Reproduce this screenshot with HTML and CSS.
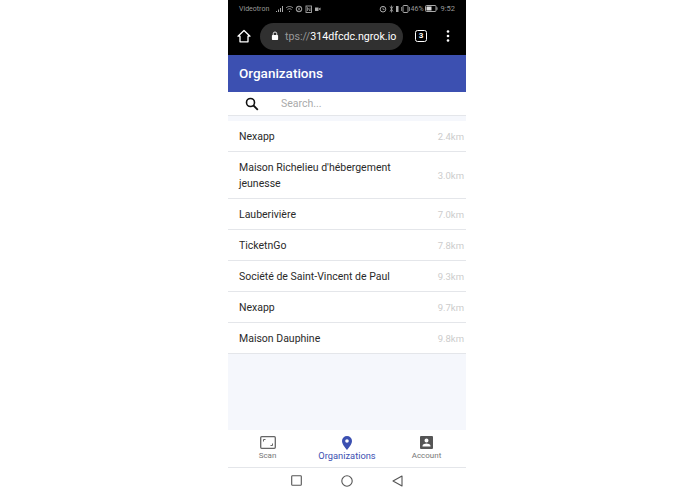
FILE: index.html
```html
<!DOCTYPE html>
<html lang="en">
<head>
<meta charset="utf-8">
<title>Organizations</title>
<link rel="stylesheet" href="styles.css">
</head>
<body>
<div class="phone">
  <div class="chrome">
    <div class="status">
      <div class="status-group">
        <span>Videotron</span>
        <svg class="st-left" viewBox="0 0 46 8" width="46" height="8">
          <path d="M1 7h1V6H1zM3 7h1V4.500H3zM5 7h1V3H5zM7 7h1V1H7z" fill="#aaa"/>
          <path d="M11 3c2-2 5-2 7 0M12.500 4.500c1-1 3-1 4 0M14 6.500h1" stroke="#aaa" stroke-width=".9" fill="none"/>
          <circle cx="24" cy="4" r="2.800" stroke="#aaa" fill="none"/>
          <path d="M22 1.500l4 5M26 1.500l-4 5" stroke="#aaa" stroke-width=".6"/>
          <rect x="31" y="1" width="5.500" height="6.500" stroke="#aaa" stroke-width=".9" fill="none"/>
          <path d="M32.500 6V2.500L35 6V2.500" stroke="#aaa" stroke-width=".7" fill="none"/>
          <rect x="40" y="2.500" width="3.500" height="3.500" fill="#aaa"/><path d="M43.500 4l2-1.500v3z" fill="#aaa"/>
        </svg>
      </div>
      <div class="status-group">
        <svg viewBox="0 0 21 8" width="21" height="8">
          <circle cx="4" cy="4.200" r="2.800" stroke="#aaa" fill="none"/>
          <path d="M4 2.500V4.500H5.500" stroke="#aaa" stroke-width=".7" fill="none"/>
          <path d="M11 1.500l3 5M14 1.500l-3 5M12.500 .5v7" stroke="#aaa" stroke-width=".8" fill="none"/>
          <rect x="17" y="1" width="2.500" height="6" fill="#aaa"/>
        </svg>
        <svg viewBox="0 0 9 8" width="9" height="8">
          <rect x="2" y=".5" width="5" height="7" rx=".8" stroke="#aaa" fill="none"/>
          <path d="M.5 2v4M8.500 2v4" stroke="#aaa" stroke-width=".7"/>
        </svg>
        <span>46%</span>
        <svg viewBox="0 0 13 7" width="13" height="7">
          <rect x=".5" y=".5" width="10.500" height="6" rx="1" stroke="#aaa" fill="none"/>
          <rect x="1.500" y="1.500" width="5" height="4" fill="#ddd"/>
          <rect x="11.500" y="2.300" width="1" height="2.500" fill="#aaa"/>
        </svg>
        <span class="clock">9:52</span>
      </div>
    </div>
    <div class="toolbar">
      <svg class="home" viewBox="0 0 14 14" width="14" height="14">
        <path d="M7 1.500L1 7.200h2V12.800h8V7.200h2z" stroke="#fff" stroke-width="1.300" fill="none" stroke-linejoin="round"/>
      </svg>
      <div class="url">
        <svg class="lock" viewBox="0 0 9 11" width="8" height="10">
          <path d="M2.500 4.500V3a2 2 0 0 1 4 0v1.500" stroke="#fff" stroke-width="1" fill="none"/>
          <rect x="1" y="4.500" width="7" height="5.500" rx=".8" fill="#fff"/>
        </svg>
        <span class="url-text"><span class="url-dim">tps://</span>314dfcdc.ngrok.io</span>
      </div>
      <div class="tabs-count">3</div>
      <svg class="menu" viewBox="0 0 4 12" width="4" height="12">
        <circle cx="2" cy="1.500" r="1.300" fill="#fff"/><circle cx="2" cy="6" r="1.300" fill="#fff"/><circle cx="2" cy="10.500" r="1.300" fill="#fff"/>
      </svg>
    </div>
  </div>
  <header class="appbar">Organizations</header>
  <div class="search">
    <svg viewBox="0 0 14 14" width="14" height="14">
      <circle cx="5.500" cy="5.500" r="4" stroke="#111" stroke-width="1.600" fill="none"/>
      <path d="M8.500 8.500l4.300 4.300" stroke="#111" stroke-width="1.800"/>
    </svg>
    <span>Search...</span>
  </div>
  <main class="list">
    <div class="row"><span>Nexapp</span><span class="dist">2.4km</span></div>
    <div class="row"><span class="name-wrap">Maison Richelieu d'hébergement jeunesse</span><span class="dist">3.0km</span></div>
    <div class="row"><span>Lauberivière</span><span class="dist">7.0km</span></div>
    <div class="row"><span>TicketnGo</span><span class="dist">7.8km</span></div>
    <div class="row"><span>Société de Saint-Vincent de Paul</span><span class="dist">9.3km</span></div>
    <div class="row"><span>Nexapp</span><span class="dist">9.7km</span></div>
    <div class="row"><span>Maison Dauphine</span><span class="dist">9.8km</span></div>
  </main>
  <nav class="tabbar">
    <div class="tab">
      <svg viewBox="0 0 16 13" width="16" height="13">
        <rect x=".7" y=".7" width="14.600" height="11.600" rx="1" stroke="#666" stroke-width="1.300" fill="none"/>
        <path d="M3.500 5.500V3.500H5.500M12.500 7.500V9.500H10.500" stroke="#666" stroke-width="1" fill="none"/>
      </svg>
      <span>Scan</span>
    </div>
    <div class="tab tab-active">
      <svg viewBox="0 0 12 14" width="12" height="14">
        <path fill-rule="evenodd" d="M6 0a5 5 0 0 0-5 5c0 3.500 5 9 5 9s5-5.500 5-9a5 5 0 0 0-5-5zm0 6.800a1.800 1.800 0 1 1 0-3.600 1.800 1.800 0 0 1 0 3.600z" fill="#3c50b1"/>
      </svg>
      <span>Organizations</span>
    </div>
    <div class="tab">
      <svg viewBox="0 0 13 13" width="13" height="13">
        <path fill-rule="evenodd" d="M1 0h11a1 1 0 0 1 1 1v11a1 1 0 0 1-1 1H1a1 1 0 0 1-1-1V1a1 1 0 0 1 1-1zm5.500 2.500a2 2 0 1 0 0 4 2 2 0 0 0 0-4zM2.500 10.500h8V9.800c0-1.500-2.700-2.200-4-2.200s-4 .7-4 2.200z" fill="#555"/>
      </svg>
      <span>Account</span>
    </div>
  </nav>
  <div class="sysnav">
    <svg viewBox="0 0 11 11" width="11" height="11"><rect x=".7" y=".7" width="9.600" height="9.600" rx=".8" stroke="#555" stroke-width="1.100" fill="none"/></svg>
    <svg viewBox="0 0 12 12" width="12" height="12"><circle cx="6" cy="6" r="5.200" stroke="#555" stroke-width="1.100" fill="none"/></svg>
    <svg viewBox="0 0 11 12" width="11" height="12"><path d="M10 1L1 6l9 5z" stroke="#555" stroke-width="1.100" fill="none" stroke-linejoin="round"/></svg>
  </div>
</div>
</body>
</html>
```
FILE: styles.css
```css
* { box-sizing: border-box; }
html, body { margin: 0; height: 100%; background: #fff; }
body { display: flex; justify-content: flex-start; padding-left: 228px; overflow: hidden; }
.phone {
  width: 238px;
  height: 494px;
  display: flex;
  flex-direction: column;
  font-family: Roboto, "Liberation Sans", sans-serif;
  background: #f5f7fc;
}
.chrome { height: 55px; background: #000; color: #fff; flex: none; }
.status {
  height: 17px;
  padding: 0 11px 0 11px;
  display: flex;
  justify-content: space-between;
  align-items: center;
  font-size: 7px;
  color: #999;
}
.status-group { display: flex; align-items: center; gap: 1px; }
.st-left { margin-left: 5px; }
.clock { margin-left: 2px; font-size: 7.500px; }
.toolbar {
  height: 38px;
  padding: 0 0 0 9px;
  display: flex;
  align-items: center;
}
.home { flex: none; }
.url {
  width: 143px;
  height: 27px;
  margin-left: 9px;
  background: #303030;
  border-radius: 14px;
  display: flex;
  align-items: center;
  padding-left: 11px;
  gap: 6px;
  flex: none;
}
.lock { flex: none; }
.url-text { font-size: 10.700px; white-space: nowrap; }
.url-dim { color: #999; }
.tabs-count {
  width: 12px;
  height: 12px;
  margin-left: 12px;
  border: 1.300px solid #fff;
  border-radius: 2.500px;
  font-size: 8px;
  font-weight: 700;
  line-height: 10px;
  text-align: center;
  flex: none;
}
.menu { margin-left: 19px; flex: none; }
.appbar {
  height: 37px;
  flex: none;
  padding: 0 11px;
  background: #3c50b1;
  color: #fff;
  font-size: 13.500px;
  font-weight: 500;
  line-height: 36px;
}
.search {
  height: 24px;
  flex: none;
  background: #fff;
  border-bottom: 1px solid #e4e6ea;
  display: flex;
  align-items: center;
  padding: 0 0 0 17px;
  gap: 22px;
  font-size: 10.500px;
  color: #aaa;
}
.list { flex: 1; padding-top: 5px; }
.row {
  min-height: 31px;
  padding: 8px 2px 6px 11px;
  background: #fff;
  border-bottom: 1px solid #e4e6ea;
  display: flex;
  justify-content: space-between;
  align-items: center;
  font-size: 10.500px;
  line-height: 16px;
  color: #2a2a2a;
}
.name-wrap { width: 170px; }
.dist { color: #ccc; font-size: 9.500px; }
.tabbar {
  height: 38px;
  flex: none;
  background: #fff;
  border-bottom: 1px solid #e4e6ea;
  display: grid;
  grid-template-columns: 79px 80px 79px;
  padding-top: 6px;
}
.tab {
  display: flex;
  flex-direction: column;
  align-items: center;
  justify-content: flex-start;
  font-size: 8px;
  color: #777;
  line-height: 10px;
  gap: 2px;
}
.tab-active { color: #3c50b1; font-size: 9.300px; line-height: 11px; gap: 0; }
.sysnav {
  height: 26px;
  flex: none;
  background: #fff;
  display: flex;
  justify-content: center;
  align-items: center;
  gap: 39px;
  padding-bottom: 1px;
}
```
